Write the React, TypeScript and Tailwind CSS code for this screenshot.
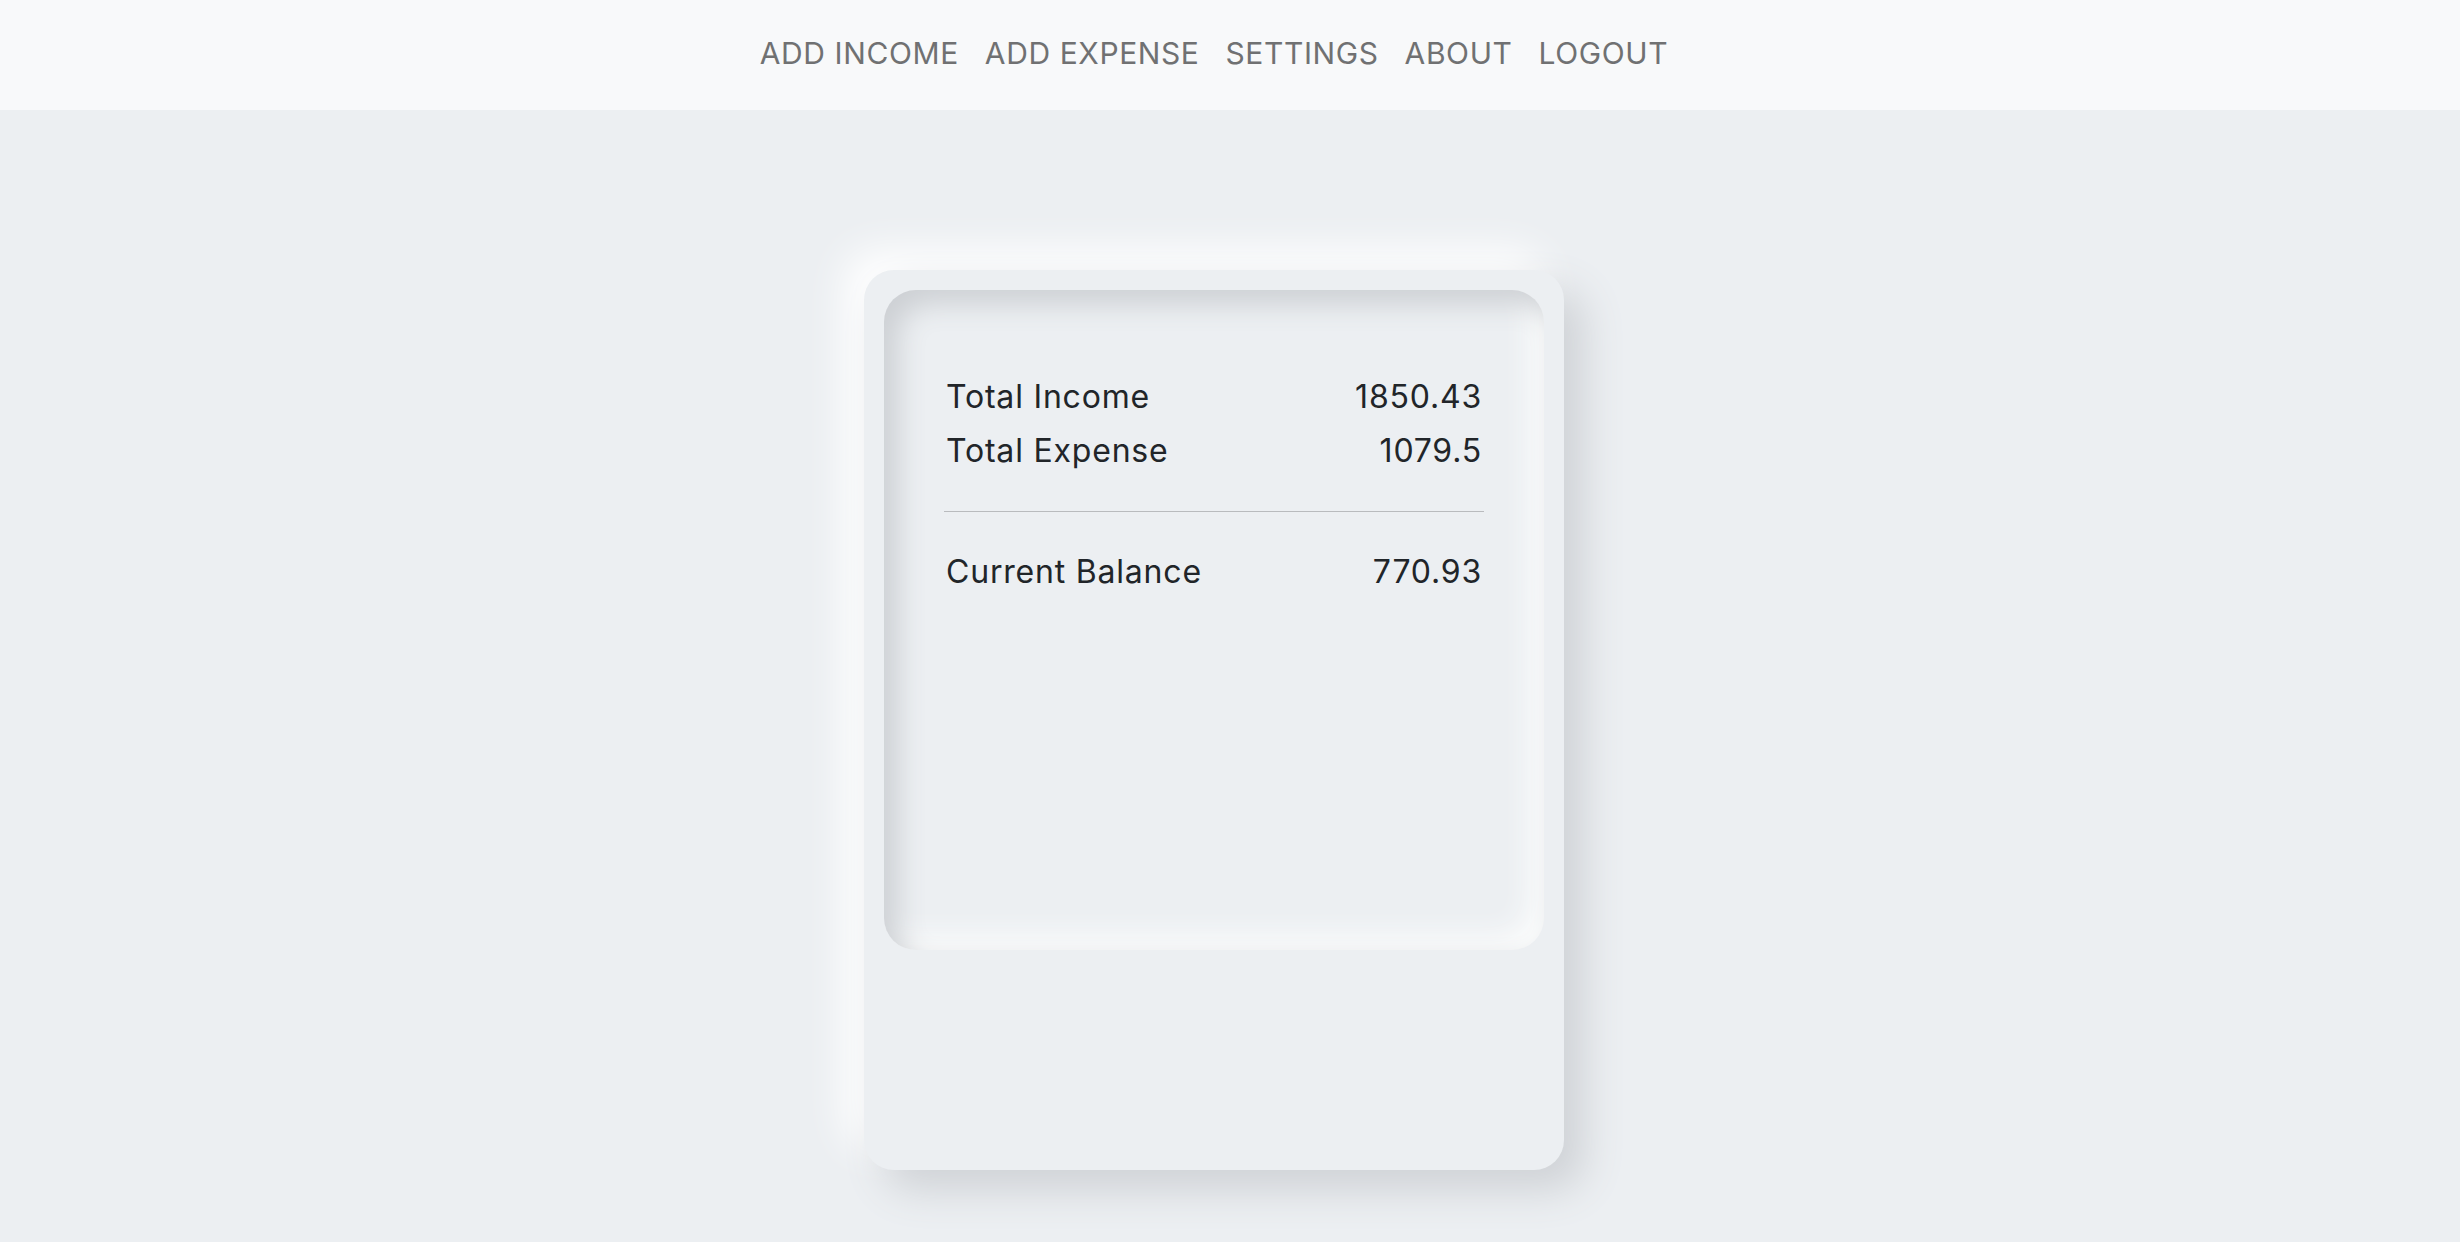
const navItems = ['ADD INCOME', 'ADD EXPENSE', 'SETTINGS', 'ABOUT', 'LOGOUT'];

const rows = [
  { label: 'Total Income', value: '1850.43' },
  { label: 'Total Expense', value: '1079.5' },
];

function Navbar() {
  return (
    <nav className="h-[110px] bg-[#f8f9fa] flex items-center justify-center pr-[32px] pb-[5px]">
      <ul className="flex items-center gap-[26px]">
        {navItems.map((item) => (
          <li key={item} className="text-[30px] leading-none text-[#707172] tracking-[0.6px]">
            {item}
          </li>
        ))}
      </ul>
    </nav>
  );
}

function SummaryRow({ label, value }: { label: string; value: string }) {
  return (
    <div className="flex justify-between items-center px-[2px] text-[32px] leading-[54px] text-[#212529] tracking-[0.8px]">
      <span>{label}</span>
      <span>{value}</span>
    </div>
  );
}

export default function App() {
  return (
    <div
      className="min-h-[1242px] bg-[#eceff2]"
      style={{ fontFamily: 'Inter, "Noto Sans", sans-serif' }}
    >
      <Navbar />

      <main className="flex justify-center pt-[160px] pr-[32px]">
        {/* outer raised card */}
        <div className="w-[700px] h-[900px] rounded-[30px] bg-[#eceff2] p-[20px] shadow-[20px_20px_40px_#cfd2d6,-20px_-20px_40px_#ffffff]">
          {/* inset panel */}
          <div className="h-[660px] rounded-[32px] bg-[#eceff2] px-[60px] pt-[80px] shadow-[inset_14px_14px_28px_#cdd0d4,inset_-14px_-14px_28px_#fbfcfc]">
            {rows.map((r) => (
              <SummaryRow key={r.label} {...r} />
            ))}
            <div className="h-px bg-[#b9bbbe] my-[33px]" />
            <SummaryRow label="Current Balance" value="770.93" />
          </div>
        </div>
      </main>
    </div>
  );
}
